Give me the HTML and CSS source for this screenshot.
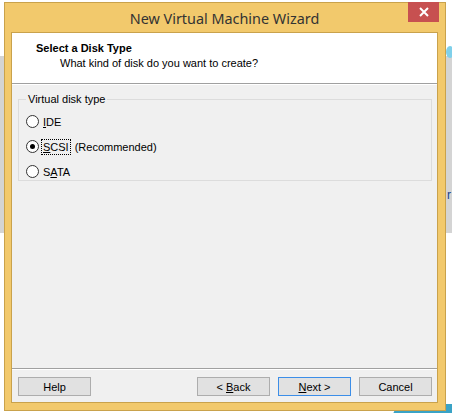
FILE: index.html
```html
<!DOCTYPE html>
<html>
<head>
<meta charset="utf-8">
<link rel="stylesheet" href="styles.css">
</head>
<body>
<div class="desk-band"></div>
<div class="desk-blob"></div>
<div class="desk-text">r</div>
<div class="desk-tri"></div>
<div class="window">
  <div class="titlebar">
    <div class="title">New Virtual Machine Wizard</div>
    <div class="close"><svg width="12" height="10" viewBox="0 0 12 10"><path d="M2 1 L10 9 M10 1 L2 9" stroke="#fff" stroke-width="2"/></svg></div>
  </div>
  <div class="client">
    <div class="header">
      <div class="h-title">Select a Disk Type</div>
      <div class="h-sub">What kind of disk do you want to create?</div>
    </div>
    <div class="body">
      <fieldset class="group">
        <legend>Virtual disk type</legend>
        <div class="radio-row"><span class="radio"></span><span class="lbl"><u>I</u>DE</span></div>
        <div class="radio-row"><span class="radio checked"></span><span class="lbl focus"><u>S</u>CSI</span><span class="rec">(Recommended)</span></div>
        <div class="radio-row"><span class="radio"></span><span class="lbl">S<u>A</u>TA</span></div>
      </fieldset>
    </div>
    <div class="footer">
      <div class="btn"><span>Help</span></div>
      <div class="spacer"></div>
      <div class="btn"><span>&lt; <u>B</u>ack</span></div>
      <div class="btn default"><span><u>N</u>ext &gt;</span></div>
      <div class="btn"><span>Cancel</span></div>
    </div>
  </div>
</div>
</body>
</html>
```
FILE: styles.css
```css
html, body { margin: 0; padding: 0; }
body {
  width: 452px; height: 413px; overflow: hidden; position: relative;
  background: #ffffff;
  font-family: "Liberation Sans", Arial, sans-serif;
  font-size: 11px; color: #000;
}
.desk-band { position: absolute; left: 0; top: 56px; width: 452px; height: 177px; background: #d4d4d4; }
.desk-blob { position: absolute; left: 446px; top: 46px; width: 8px; height: 12px; border-radius: 50%; background: #7fd0ea; }
.desk-text { position: absolute; left: 447px; top: 188px; font-size: 12px; color: #1a3f8a; }
.desk-tri { position: absolute; left: 392px; top: 404px; width: 70px; height: 12px; background: #3aa3c6; clip-path: polygon(8% 0, 100% 0, 100% 100%, 0 100%); }

.window {
  position: absolute; left: 4px; top: 2px;
  width: 427px; height: 400px;
  border: 1px solid #c9a24c;
  background: #f2c96c;
  display: flex; flex-direction: column;
  padding: 0 7px 7px 6px;
  box-sizing: content-box;
}
.titlebar { height: 29px; position: relative; display: flex; justify-content: center; align-items: center; }
.title { font-family: "Noto Sans", "Open Sans", sans-serif; font-size: 14.4px; color: #333; padding-top: 2px; }
.close {
  position: absolute; right: -1px; top: -1px; width: 31px; height: 20px;
  background: #c75050; display: flex; align-items: center; justify-content: center;
}
.client {
  flex: 1; border: 1px solid #c9a24c; background: #f0f0f0;
  display: flex; flex-direction: column;
}
.header { background: #fff; height: 51px; border-bottom: 1px solid #a0a0a0; box-shadow: 0 1px 0 #fff; box-sizing: border-box; padding: 9px 0 0 24px; }
.h-title { font-weight: bold; font-size: 11px; }
.h-sub { padding: 3px 0 0 24px; }
.body { flex: 1; padding: 9px 5px 0 6px; }
.group {
  margin: 0; border: 1px solid #dcdcdc; padding: 4px 0 10px 7px; height: 88px; box-sizing: border-box;
}
.group legend { padding: 0 2px; margin-left: 0; }
.radio-row { display: flex; align-items: center; height: 25px; }
.radio {
  width: 11px; height: 11px; border: 1px solid #333; border-radius: 50%; background: #fff; margin-right: 3px; position: relative; flex: none;
}
.radio.checked::after { content: ""; position: absolute; left: 3px; top: 3px; width: 5px; height: 5px; border-radius: 50%; background: #000; }
.lbl { padding: 1px; }
.lbl.focus { outline: 1px dotted #000; }
.rec { margin-left: 5px; }
.footer {
  border-top: 1px solid #a0a0a0; box-shadow: inset 0 1px 0 #fff; height: 34px; box-sizing: border-box;
  display: flex; align-items: flex-start; padding: 8px 5px 0 6px; gap: 8px;
}
.spacer { flex: 1; }
.btn {
  width: 73px; height: 19px; box-sizing: border-box; border: 1px solid #adadad;
  background: #e1e1e1; display: flex; align-items: center; justify-content: center;
  white-space: pre;
}
.btn.default { border-color: #3c8ee8; }
```
